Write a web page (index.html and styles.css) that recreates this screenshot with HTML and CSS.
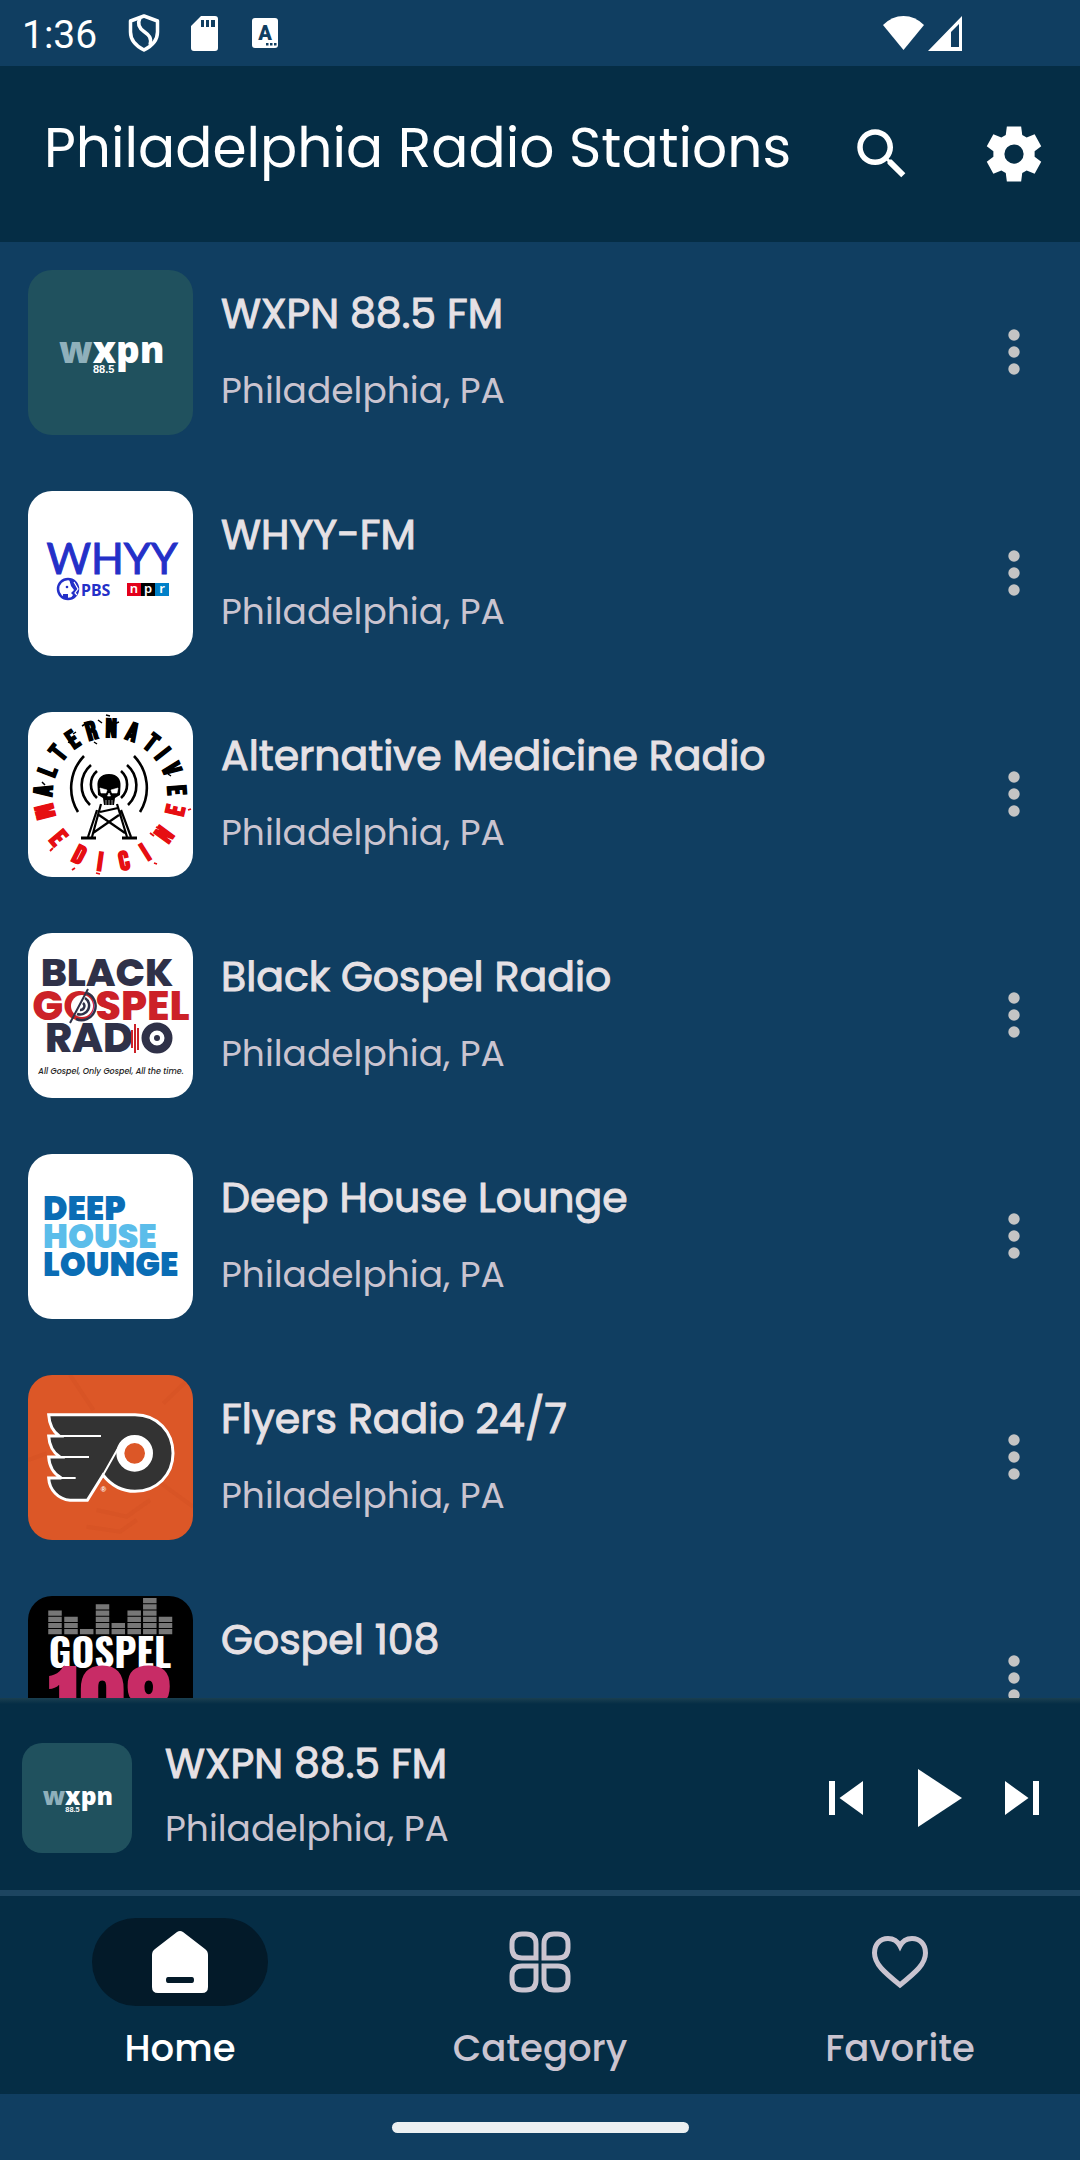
FILE: index.html
```html
<!DOCTYPE html>
<html lang="en">
<head>
<meta charset="utf-8">
<meta name="viewport" content="width=device-width, initial-scale=1">
<title>Philadelphia Radio Stations</title>
<link rel="stylesheet" href="styles.css">
</head>
<body>
<svg class="symbols" aria-hidden="true">
  <symbol id="more" viewBox="0 0 12 48">
    <circle cx="6" cy="6" r="5.700"/><circle cx="6" cy="23" r="5.700"/><circle cx="6" cy="40" r="5.700"/>
  </symbol>
</svg>
<div class="app">
  <div class="status">
    <span class="clock">1:36</span>
    <svg class="st-shield" viewBox="0 0 32 38" aria-hidden="true">
      <path d="M16 2 29.500 7V18C29.500 26 24 32 16 36 8 32 2.500 26 2.500 18V7Z" fill="none" stroke="#fff" stroke-width="3.500" stroke-linejoin="round"/>
      <path d="M12 4C9 10 11 14 16 17.500 21 21 24 24 22 31" fill="none" stroke="#fff" stroke-width="3.500"/>
    </svg>
    <svg class="st-card" viewBox="0 0 27 35" aria-hidden="true">
      <path fill="#fff" fill-rule="evenodd" d="M10 0H24Q27 0 27 3V32Q27 35 24 35H3Q0 35 0 32V10ZM10 4V11H13V4ZM15 4V11H18V4ZM20 4V11H24V4Z"/>
    </svg>
    <svg class="st-letter" viewBox="0 0 26 30" aria-hidden="true">
      <rect width="26" height="30" rx="3" fill="#fff"/>
      <text x="13" y="22" class="st-a">A</text>
      <path d="M14 25h2.500v2.500H14zM18 25h2.500v2.500H18zM22 25h2.500v2.500H22z" fill="#103e61"/>
    </svg>
    <span class="spacer"></span>
    <svg class="st-wifi" viewBox="0 0 41 34" aria-hidden="true"><path fill="#fff" d="M20.500 34 0 9Q9 0 20.500 0T41 9Z"/></svg>
    <svg class="st-signal" viewBox="0 0 34 35" aria-hidden="true"><path fill="#fff" fill-rule="evenodd" d="M34 0V35H0ZM31 8 23 16V31H31Z"/></svg>
  </div>

  <header class="header">
    <h1 class="title">Philadelphia Radio Stations</h1>
    <div class="actions">
      <button class="icon-btn" type="button" aria-label="Search">
        <svg viewBox="0 0 24 24"><path d="M15.500 14h-.79l-.28-.27C15.410 12.590 16 11.110 16 9.500 16 5.910 13.090 3 9.500 3S3 5.910 3 9.500 5.910 16 9.500 16c1.610 0 3.090-.59 4.230-1.570l.27.28v.79l5 4.990L20.490 19l-4.990-5zm-6 0C7.010 14 5 11.990 5 9.500S7.010 5 9.500 5 14 7.010 14 9.500 11.990 14 9.500 14z"/></svg>
      </button>
      <button class="icon-btn" type="button" aria-label="Settings">
        <svg viewBox="0 0 24 24"><path fill-rule="evenodd" d="M9.400 2H14.600L15 5.100 16.600 6 19.500 4.800 21.900 9.200 19.500 11V13L21.900 14.800 19.500 19.200 16.600 18 15 18.900 14.600 22H9.400L9 18.900 7.400 18 4.500 19.200 2.100 14.800 4.500 13V11L2.100 9.200 4.500 4.800 7.400 6 9 5.100ZM12 8.500A3.500 3.500 0 1 0 12 15.500 3.500 3.500 0 0 0 12 8.500Z"/></svg>
      </button>
    </div>
  </header>

  <main class="list">
    <article class="station">
      <svg class="art" viewBox="0 0 165 165" role="img" aria-label="WXPN logo">
        <rect width="165" height="165" fill="#20515e"/>
        <text x="31" y="93" class="logo-wxpn"><tspan fill="#8fb0bb">w</tspan><tspan fill="#fff">xpn</tspan></text>
        <text x="65" y="103" class="logo-freq">88.5</text>
      </svg>
      <div class="info"><h2 class="name">WXPN 88.5 FM</h2><p class="place">Philadelphia, PA</p></div>
      <button class="more" type="button" aria-label="More options for WXPN 88.5 FM"><svg><use href="#more"/></svg></button>
    </article>

    <article class="station">
      <svg class="art" viewBox="0 0 165 165" role="img" aria-label="WHYY logo">
        <rect width="165" height="165" fill="#fff"/>
        <text x="84" y="83" class="logo-whyy">WHYY</text>
        <circle cx="40" cy="98" r="10" fill="#fff" stroke="#2430c8" stroke-width="2.500"/>
        <path d="M41 88C47 90 51 95 50 101 49 105 46 108 42 108L45 104 43 102 46 99 43 95Z" fill="#2430c8"/>
        <path d="M46 91 50 98 47 102 49 104" fill="none" stroke="#fff" stroke-width="1.200"/>
        <circle cx="39" cy="96" r="1.300" fill="#2430c8"/>
        <path d="M35 103H40V108H35Z" fill="#2430c8"/>
        <text x="53" y="105" class="logo-pbs">PBS</text>
        <path fill="#e3001b" d="M99 92h14v13H99z"/><path fill="#000" d="M113 92h14v13H113z"/><path fill="#0080c8" d="M127 92h14v13H127z"/>
        <text class="logo-npr" x="106 120 134" y="102">npr</text>
      </svg>
      <div class="info"><h2 class="name">WHYY-FM</h2><p class="place">Philadelphia, PA</p></div>
      <button class="more" type="button" aria-label="More options for WHYY-FM"><svg><use href="#more"/></svg></button>
    </article>

    <article class="station">
      <svg class="art" viewBox="0 0 165 165" role="img" aria-label="Alternative Medicine logo">
        <rect width="165" height="165" fill="#fff"/>
        <text class="logo-ring" x="23.700 26.200 34.100 45.800 60.700 77.400 96.500 114.200 125.900 133.400 139.500" y="84.500 66.300 49.900 37.500 28.800 25 26.600 34.600 45 55.700 74" rotate="-86 -69 -51 -34 -16 1 20 38 52 67 86">ALTERNATIVE</text>
        <text class="logo-ring logo-ring-red" x="6.600 20.600 42.600 68.500 93 119.800 140.200 154.900" y="95 128.100 148.200 157.900 158.400 148.900 132.200 104.900" rotate="76 50 27 8 -12 -32 -54 -77">MEDICINE</text>
        <g fill="none" stroke="#000" stroke-width="2.600">
          <path d="M106 44A46 46 0 0 1 112 100M56 44A46 46 0 0 0 50 100"/>
          <path d="M99 53A27 27 0 0 1 100 93M63 53A27 27 0 0 0 62 93"/>
          <path d="M93 59A18 18 0 0 1 93 86M69 59A18 18 0 0 0 69 86"/>
          <path d="M73 92 64 125M69 98 60 125M89 92 99 125M93 98 103 125M71 103 97 121M91 103 65 121M72 100 90 96" stroke-width="2.200"/>
          <path d="M53 126H68M94 126H109" stroke-width="3"/>
        </g>
        <path d="M81 62C90 62 93 68 92.500 74L92 83 87 86 86 93H76L75 86 70 83 69.500 74C69 68 72 62 81 62Z"/>
        <path d="M72 76 79 78 78 81H73ZM90 76 83 78 84 81H89ZM81 81 82.500 84H79.500ZM78 88V93M81 88V93M84 88V93" fill="#fff" stroke="#fff" stroke-width=".6"/>
        <path d="M45 22l3-2M54 14l5-3M70 8l4 3M78 3l4 1M86 12l5-2M98 24l3 2M140 62l3 2M14 70l3 3M40 30l3 1M66 30l3 2" stroke="#000" stroke-width="1.500"/>
        <path d="M122 121l4 3M128 115l4 2M160 98l3-1M22 139l3-3M44 158l3-2M68 161l4 1M126 151l3 1" stroke="#e60e12" stroke-width="1.800"/>
      </svg>
      <div class="info"><h2 class="name">Alternative Medicine Radio</h2><p class="place">Philadelphia, PA</p></div>
      <button class="more" type="button" aria-label="More options for Alternative Medicine Radio"><svg><use href="#more"/></svg></button>
    </article>

    <article class="station">
      <svg class="art" viewBox="0 0 165 165" role="img" aria-label="Black Gospel Radio logo">
        <rect width="165" height="165" fill="#fff"/>
        <text x="79" y="53" class="logo-black logo-navy logo-first">BLACK</text>
        <text x="83" y="87" class="logo-black logo-red">GOSPEL</text>
        <text x="61" y="119" class="logo-black logo-navy">RAD</text>
        <circle cx="54" cy="73" r="11" fill="#fff"/>
        <path d="M60 56 42 90" stroke="#2f3148" stroke-width="2"/>
        <g fill="none" stroke="#2f3148" stroke-width="2.500"><path d="M59 60A14 14 0 0 1 48 86M57 65A9 9 0 0 1 49 81M55 70A4 4 0 0 1 52 77"/></g>
        <path d="M104 97V115M107 91V120M110 95V117" stroke="#cc2128" stroke-width="2"/>
        <circle cx="129" cy="105" r="11.500" fill="#fff" stroke="#2f3148" stroke-width="8"/><circle cx="129" cy="105" r="3" fill="#2f3148"/>
        <text x="83" y="141" class="logo-tag">All Gospel, Only Gospel, All the time.</text>
      </svg>
      <div class="info"><h2 class="name">Black Gospel Radio</h2><p class="place">Philadelphia, PA</p></div>
      <button class="more" type="button" aria-label="More options for Black Gospel Radio"><svg><use href="#more"/></svg></button>
    </article>

    <article class="station">
      <svg class="art" viewBox="0 0 165 165" role="img" aria-label="Deep House Lounge logo">
        <rect width="165" height="165" fill="#fff"/>
        <g class="logo-deep"><text x="15" y="66">DEEP</text><text x="15" y="94" class="logo-deep-light">HOUSE</text><text x="15" y="122">LOUNGE</text></g>
      </svg>
      <div class="info"><h2 class="name">Deep House Lounge</h2><p class="place">Philadelphia, PA</p></div>
      <button class="more" type="button" aria-label="More options for Deep House Lounge"><svg><use href="#more"/></svg></button>
    </article>

    <article class="station">
      <svg class="art" viewBox="24 45 495 495" role="img" aria-label="Flyers logo">
        <rect x="24" y="45" width="495" height="495" fill="#dc5727"/>
        <path d="M150 45 220 150M519 440 430 375 400 350M24 300 80 280M200 500 300 515 350 480M230 450 320 470 390 420M519 45 430 130" fill="none" stroke="#cb4d20" stroke-width="12" opacity=".25"/>
        <g stroke="#fff" stroke-width="9" stroke-linejoin="miter">
          <path fill="#333" d="M86 164H345C412 164 459 216 459 280 459 345 410 394 345 394 305 394 275 378 249 345L202 421H150C115 418 88 390 86 354H124C102 342 88 322 86 291H120C102 280 88 258 86 228H118C100 216 88 195 86 164Z"/>
          <path fill="none" stroke-width="6" d="M100 228H243M100 291H207M100 354H167M249 345 296 262"/>
        </g>
        <circle cx="344" cy="280" r="43" fill="#dc5727" stroke="#fff" stroke-width="24"/>
        <text x="250" y="395" class="logo-reg">®</text>
      </svg>
      <div class="info"><h2 class="name">Flyers Radio 24/7</h2><p class="place">Philadelphia, PA</p></div>
      <button class="more" type="button" aria-label="More options for Flyers Radio 24/7"><svg><use href="#more"/></svg></button>
    </article>

    <article class="station">
      <svg class="art" viewBox="0 0 165 165" role="img" aria-label="Gospel 108 logo">
        <rect width="165" height="165" fill="#000"/>
        <g fill="none" stroke="#777" stroke-width="13.500" stroke-dasharray="5.200 1">
          <path d="M27 38.300V14M43 38.300V20.300M58.700 38.300V32.700M74.500 38.300V8M90.300 38.300V26.300M106.200 38.300V14M121.800 38.300V2M137.500 38.300V20.300"/>
        </g>
        <text x="82" y="72" class="logo-g108">GOSPEL</text>
        <text x="82" y="151" class="logo-108">108</text>
      </svg>
      <div class="info"><h2 class="name">Gospel 108</h2><p class="place">Philadelphia, PA</p></div>
      <button class="more" type="button" aria-label="More options for Gospel 108"><svg><use href="#more"/></svg></button>
    </article>
  </main>

  <section class="player" aria-label="Now playing">
    <svg class="art art-small" viewBox="0 0 165 165" role="img" aria-label="WXPN logo">
      <rect width="165" height="165" fill="#20515e"/>
      <text x="31" y="93" class="logo-wxpn"><tspan fill="#8fb0bb">w</tspan><tspan fill="#fff">xpn</tspan></text>
      <text x="65" y="103" class="logo-freq">88.5</text>
    </svg>
    <div class="info info-player"><h2 class="name">WXPN 88.5 FM</h2><p class="place">Philadelphia, PA</p></div>
    <button class="ctl" type="button" aria-label="Previous"><svg width="34" height="34" viewBox="0 0 34 34"><path d="M0 0H6V34H0ZM34 0V34L10.500 17Z"/></svg></button>
    <button class="ctl" type="button" aria-label="Play"><svg width="56" height="60" viewBox="0 0 56 60"><path d="M12 1 56 30 12 59Z"/></svg></button>
    <button class="ctl" type="button" aria-label="Next"><svg width="34" height="34" viewBox="0 0 34 34"><path d="M28 0H34V34H28ZM0 0V34L23.500 17Z"/></svg></button>
  </section>

  <nav class="nav">
    <a class="tab tab-on" href="#home" aria-current="page">
      <span class="pill"><svg viewBox="0 0 64 64"><path fill="#fff" fill-rule="evenodd" d="M29 2Q32 0 35 2L57 19Q60 21 60 25V57Q60 63 54 63H10Q4 63 4 57V25Q4 21 7 19ZM20 47Q18 47 18 50T20 53H44Q46 53 46 50T44 47Z"/></svg></span>
      <span class="tab-label">Home</span>
    </a>
    <a class="tab" href="#category">
      <span class="pill"><svg viewBox="0 0 64 64"><path d="M14 4H18Q28 4 28 14V28H14Q4 28 4 18V14Q4 4 14 4ZM50 4H46Q36 4 36 14V28H50Q60 28 60 18V14Q60 4 50 4ZM14 60H18Q28 60 28 50V36H14Q4 36 4 46V50Q4 60 14 60ZM50 60H46Q36 60 36 50V36H50Q60 36 60 46V50Q60 60 50 60Z"/></svg></span>
      <span class="tab-label">Category</span>
    </a>
    <a class="tab" href="#favorite">
      <span class="pill"><svg viewBox="0 0 64 64"><path d="M32 16C29 10 24 8.500 20 8.500 12 8.500 6.500 14.500 6.500 23 6.500 34 16 42 32 55 48 42 57.500 34 57.500 23 57.500 14.500 52 8.500 44 8.500 40 8.500 35 10 32 16Z"/></svg></span>
      <span class="tab-label">Favorite</span>
    </a>
  </nav>
  <div class="gesture"><span class="handle"></span></div>
</div>
</body>
</html>
```

FILE: styles.css
```css
* { box-sizing: border-box; }

body {
  margin: 0;
  background: #103e61;
  color: #fff;
  font-family: Poppins, Inter, sans-serif;
}

h1, h2, p { margin: 0; font-weight: 400; }

button {
  margin: 0;
  padding: 0;
  border: 0;
  background: none;
  cursor: pointer;
}

svg { display: block; }

.symbols { position: absolute; width: 0; height: 0; }

.app {
  display: flex;
  flex-direction: column;
  height: 100vh;
}

/* System status bar */
.status {
  display: flex;
  flex: none;
  align-items: center;
  height: 66px;
  padding: 0 118px 0 22px;
  font-family: Roboto, sans-serif;
}
.clock { width: 106px; font-size: 39px; line-height: 44px; padding-top: 4px; }
.st-shield { width: 32px; height: 38px; margin-right: 31px; }
.st-card { width: 27px; height: 35px; margin-right: 34px; }
.st-letter { width: 26px; height: 30px; }
.st-a { font: 900 20px Roboto, sans-serif; text-anchor: middle; fill: #103e61; }
.spacer { flex: 1; }
.st-wifi { width: 41px; height: 34px; margin-right: 4px; }
.st-signal { width: 34px; height: 35px; }

/* App header */
.header {
  display: flex;
  flex: none;
  align-items: center;
  height: 176px;
  padding: 0 33px 0 44px;
  background: #052d45;
}
.title {
  flex: 1;
  padding-bottom: 12px;
  font-size: 55px;
  line-height: 72px;
  white-space: nowrap;
}
.actions { display: flex; flex: none; gap: 66px; }
.icon-btn { flex: none; width: 66px; height: 66px; }
.icon-btn svg { width: 66px; height: 66px; fill: #fff; }

/* Station list */
.list { flex: 1; min-height: 0; overflow: hidden; }
.station {
  display: flex;
  align-items: flex-start;
  padding: 28px 33px 28px 28px;
}
.art { flex: none; width: 165px; height: 165px; border-radius: 24px; }
.info { flex: 1; min-width: 0; padding: 12px 0 0 28px; }
.name {
  color: #e6e1e5;
  font-size: 41px;
  line-height: 64px;
  -webkit-text-stroke: 1px #e6e1e5;
}
.place {
  margin-top: 15px;
  color: #cac4d0;
  font-size: 36px;
  line-height: 60px;
}
.more {
  display: flex;
  align-items: center;
  justify-content: center;
  align-self: center;
  width: 66px;
  height: 66px;
}
.more svg { width: 12px; height: 48px; fill: #c4c4c4; }

/* Mini player */
.player {
  display: flex;
  flex: none;
  align-items: center;
  gap: 43px;
  height: 198px;
  padding: 8px 41px 0 22px;
  border-bottom: 6px solid #1d4560;
  background: linear-gradient(#1a3f50, #052d45 6px);
}
.art-small { width: 110px; height: 110px; border-radius: 20px; }
.info-player { margin-left: -10px; padding: 0 0 5px; }
.info-player .place { margin-top: 3px; }
.ctl svg { fill: #fff; }

/* Bottom navigation */
.nav {
  display: grid;
  flex: none;
  grid-template-columns: repeat(3, 1fr);
  padding: 22px 0 21px;
  background: #052d45;
}
.tab {
  display: flex;
  flex-direction: column;
  align-items: center;
  gap: 17px;
  color: #cac4d0;
  text-decoration: none;
}
.tab-on { color: #fff; }
.pill {
  display: flex;
  align-items: center;
  justify-content: center;
  width: 176px;
  height: 88px;
  border-radius: 44px;
}
.tab-on .pill { background: #031a29; }
.pill svg { width: 64px; height: 64px; fill: none; stroke: #cac4d0; stroke-width: 5px; }
.tab-on .pill svg { stroke: none; }
.tab-label { font-size: 37px; font-weight: 500; line-height: 50px; }

.gesture {
  display: flex;
  flex: none;
  align-items: center;
  justify-content: center;
  height: 66px;
}
.handle { width: 297px; height: 11px; border-radius: 6px; background: #ecf0f2; }

/* Lettering inside the station logos */
.logo-wxpn { font: 800 37px "Open Sans", sans-serif; }
.logo-freq { font: 700 11px "Liberation Sans", sans-serif; fill: #fff; }
.logo-whyy { font: 400 43px Lato, sans-serif; text-anchor: middle; fill: #2430c8; stroke: #2430c8; stroke-width: 1px; }
.logo-pbs { font: 700 16px "Noto Sans", sans-serif; fill: #2430c8; }
.logo-npr { font: 600 13px "Noto Sans", sans-serif; fill: #fff; text-anchor: middle; }
.logo-ring { font: 700 26px "Bebas Neue", Oswald, Roboto, sans-serif; fill: #000; stroke: #000; stroke-width: 1px; }
.logo-ring-red { fill: #e60e12; stroke: #e60e12; }
.logo-black { font: 800 41px Poppins, Lato, sans-serif; text-anchor: middle; }
.logo-first { font-size: 39px; }
.logo-navy { fill: #2f3148; }
.logo-red { fill: #cc2128; }
.logo-tag { font: italic 500 8px Poppins, "Open Sans", sans-serif; text-anchor: middle; fill: #222; }
.logo-deep { font: 900 33px Poppins, Lato, sans-serif; fill: #0a6db5; }
.logo-deep-light { fill: #5bbdea; }
.logo-reg { font: 700 22px "Liberation Sans", sans-serif; text-anchor: middle; fill: #fff; }
.logo-g108 { font: 700 39px Oswald, Roboto, sans-serif; text-anchor: middle; fill: #fff; }
.logo-108 { font: 400 94px Anton, "Bebas Neue", Oswald, Roboto, sans-serif; text-anchor: middle; fill: #c82c66; }
```
